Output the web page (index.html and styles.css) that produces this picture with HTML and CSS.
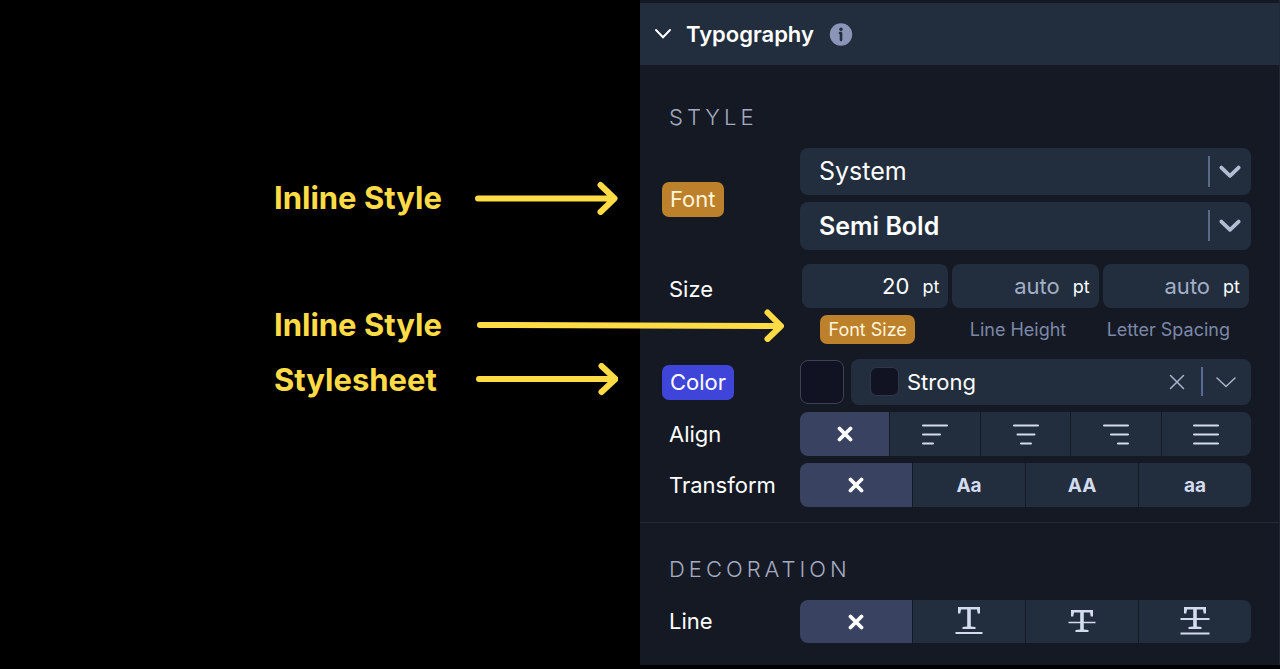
FILE: index.html
```html
<!DOCTYPE html>
<html lang="en">
<head>
<meta charset="utf-8">
<title>Typography</title>
<link rel="stylesheet" href="styles.css">
</head>
<body>
<svg class="defs" aria-hidden="true">
  <symbol id="cross" viewBox="0 0 16 16"><path d="M2.500 2.500l11 11M13.500 2.500l-11 11" fill="none" stroke="currentColor" stroke-width="3.800" stroke-linecap="round"/></symbol>
  <symbol id="chevron" viewBox="0 0 22 14"><path d="M2.400 2.600L11 10.800l8.600-8.200" fill="none" stroke="currentColor" stroke-width="3.800" stroke-linecap="round" stroke-linejoin="round"/></symbol>
  <symbol id="serif-t" viewBox="0 0 24 22"><path d="M1 0h22v6.500h-2.300L20 2.600h-6.200v16.800l4.700.6V22H5.500v-2l4.700-.6V2.600H4L3.300 6.500H1z" fill="currentColor"/></symbol>
</svg>
<div class="page">
  <aside class="notes">
    <div class="note"><span class="note-text">Inline Style</span>
      <svg class="arrow" width="143" height="34" viewBox="0 0 143 34"><path d="M3 17.500H139M125.500 4L139.500 17.500L125.500 31"/></svg></div>
    <div class="note note-second"><span class="note-text">Inline Style</span>
      <svg class="arrow" width="309" height="34" viewBox="0 0 309 34"><path d="M5 17L305 18M292.500 4.500L306 18L292.500 31"/></svg></div>
    <div class="note note-third"><span class="note-text">Stylesheet</span>
      <svg class="arrow" width="143" height="34" viewBox="0 0 143 34"><path d="M4 16H140M126.500 3L140.500 16L126.500 29"/></svg></div>
  </aside>

  <main class="panel">
    <header class="panel-head">
      <button class="toggle" type="button" aria-expanded="true">
        <svg width="18" height="12" viewBox="0 0 18 12"><path d="M2 2l7 7.200L16 2" fill="none" stroke="currentColor" stroke-width="2" stroke-linecap="round"/></svg>
        Typography
      </button>
      <button class="info" type="button" aria-label="About typography">
        <svg width="24" height="24" viewBox="0 0 24 24"><circle cx="12" cy="12.500" r="11.200" fill="#8a95b8"/><circle cx="12" cy="7.300" r="1.700" fill="#222d3d"/><path d="M11 11H12V18" fill="none" stroke="#222d3d" stroke-width="2.600" stroke-linecap="round" stroke-linejoin="round"/></svg>
      </button>
    </header>

    <section class="section">
      <h2 class="heading">STYLE</h2>

      <div class="row">
        <div class="label-cell"><label class="label badge amber" for="family">Font</label></div>
        <div class="stack">
          <div class="select-box">
            <select id="family" class="select"><option>System</option></select>
            <span class="caret"><svg width="22" height="14"><use href="#chevron"/></svg></span>
          </div>
          <div class="select-box">
            <select class="select semibold" aria-label="Font weight"><option>Semi Bold</option></select>
            <span class="caret"><svg width="22" height="14"><use href="#chevron"/></svg></span>
          </div>
        </div>
      </div>

      <div class="row row-size">
        <div class="label-cell"><span class="label">Size</span></div>
        <div class="sizes">
          <div class="field"><input id="size" class="number" type="text" value="20"><span class="unit">pt</span></div>
          <div class="field"><input id="leading" class="number" type="text" placeholder="auto"><span class="unit">pt</span></div>
          <div class="field"><input id="tracking" class="number" type="text" placeholder="auto"><span class="unit">pt</span></div>
          <div class="caption-cell"><label class="caption badge amber" for="size">Font Size</label></div>
          <div class="caption-cell"><label class="caption" for="leading">Line Height</label></div>
          <div class="caption-cell"><label class="caption" for="tracking">Letter Spacing</label></div>
        </div>
      </div>

      <div class="row row-color">
        <div class="label-cell"><label class="label badge blue" for="color">Color</label></div>
        <div class="color">
          <button class="swatch" type="button" aria-label="Pick a color"></button>
          <div class="select-box color-box">
            <select id="color" class="select color-select"><option>Strong</option></select>
            <span class="chip"></span>
            <span class="color-tools">
              <button class="clear" type="button" aria-label="Clear color"><svg width="16" height="16" viewBox="0 0 16 16"><path d="M1.500 1.500l13 13M14.500 1.500l-13 13" fill="none" stroke="currentColor" stroke-width="1.500" stroke-linecap="round"/></svg></button>
              <span class="thin-caret"><svg width="20" height="12" viewBox="0 0 20 12"><path d="M1 2l9 8.500L19 2" fill="none" stroke="currentColor" stroke-width="1.500" stroke-linecap="round"/></svg></span>
            </span>
          </div>
        </div>
      </div>

      <div class="row row-tight">
        <div class="label-cell"><span class="label" id="align">Align</span></div>
        <div class="segments" role="group" aria-labelledby="align">
          <button class="segment active" type="button" aria-label="No alignment" aria-pressed="true"><svg width="16" height="16"><use href="#cross"/></svg></button>
          <button class="segment" type="button" aria-label="Left"><svg class="lines" width="26" height="22" viewBox="0 0 26 22"><path d="M1 2.500h24M1 11.500h17M1 20.500h10"/></svg></button>
          <button class="segment" type="button" aria-label="Center"><svg class="lines" width="26" height="22" viewBox="0 0 26 22"><path d="M1 2.500h24M4.500 11.500h17M8 20.500h10"/></svg></button>
          <button class="segment" type="button" aria-label="Right"><svg class="lines" width="26" height="22" viewBox="0 0 26 22"><path d="M1 2.500h24M8 11.500h17M15 20.500h10"/></svg></button>
          <button class="segment" type="button" aria-label="Justify"><svg class="lines" width="26" height="22" viewBox="0 0 26 22"><path d="M1 2.500h24M1 11.500h24M1 20.500h24"/></svg></button>
        </div>
      </div>

      <div class="row row-tight">
        <div class="label-cell"><span class="label" id="transform">Transform</span></div>
        <div class="segments" role="group" aria-labelledby="transform">
          <button class="segment active" type="button" aria-label="No transform" aria-pressed="true"><svg width="16" height="16"><use href="#cross"/></svg></button>
          <button class="segment" type="button">Aa</button>
          <button class="segment" type="button">AA</button>
          <button class="segment" type="button">aa</button>
        </div>
      </div>
    </section>

    <section class="section section-decoration">
      <h2 class="heading">DECORATION</h2>
      <div class="row">
        <div class="label-cell"><span class="label" id="line">Line</span></div>
        <div class="segments" role="group" aria-labelledby="line">
          <button class="segment active" type="button" aria-label="No line" aria-pressed="true"><svg width="16" height="16"><use href="#cross"/></svg></button>
          <button class="segment" type="button" aria-label="Underline"><svg width="30" height="30" viewBox="0 0 30 30"><use href="#serif-t" x="3" y="0" width="24" height="22"/><path d="M1.500 26h27" stroke="currentColor" stroke-width="2"/></svg></button>
          <button class="segment" type="button" aria-label="Line through"><svg width="30" height="30" viewBox="0 0 30 30"><use href="#serif-t" x="3" y="3" width="24" height="22"/><path d="M1.500 15.500h27" stroke="currentColor" stroke-width="1.400"/></svg></button>
          <button class="segment" type="button" aria-label="Underline and line through"><svg width="30" height="30" viewBox="0 0 30 30"><use href="#serif-t" x="3" y="0" width="24" height="22"/><path d="M.5 12h29M.5 26.500h29" stroke="currentColor" stroke-width="2"/></svg></button>
        </div>
      </div>
    </section>
  </main>
</div>
</body>
</html>
```
FILE: styles.css
```css
* { box-sizing: border-box; }

body {
  margin: 0;
  background: #000;
  color: #fff;
  font-family: Inter, "Liberation Sans", sans-serif;
  font-size: 22px;
}

button, input, select {
  margin: 0;
  padding: 0;
  border: 0;
  background: none;
  color: inherit;
  font: inherit;
}

svg { display: block; flex-shrink: 0; }
.defs { display: none; }

.page {
  display: grid;
  grid-template-columns: 1fr 1fr;
  align-items: start;
}

/* Annotations */
.notes {
  position: relative;
  z-index: 1;
  display: flex;
  flex-direction: column;
  align-items: flex-end;
  padding: 178px 22px 0 0;
  color: #ffdc45;
  pointer-events: none;
}
.note { display: flex; align-items: center; width: 344px; height: 40px; }
.note-second { margin-top: 87px; }
.note-third { margin-top: 15px; }
.note-text { flex: 0 0 201px; font-size: 31px; font-weight: 700; line-height: 40px; }
.arrow {
  fill: none;
  stroke: currentColor;
  stroke-width: 6px;
  stroke-linecap: round;
  stroke-linejoin: round;
}

/* Panel */
.panel {
  min-width: 0;
  padding-top: 3px;
  background: #151924;
  border-right: 1px solid #1e2838;
}
.panel-head {
  display: flex;
  align-items: center;
  gap: 15px;
  height: 62px;
  padding-left: 14px;
  background: #222d3d;
}
.toggle { display: flex; align-items: center; gap: 14px; font-weight: 600; }

.section { padding: 40px 28px 15px 22px; }
.section-decoration { padding: 34px 28px 22px 22px; border-top: 1px solid #252c38; }
.heading {
  margin: 0 0 19px;
  padding-left: 7px;
  color: #a3abc0;
  font-size: 22px;
  font-weight: 300;
  line-height: 24px;
  letter-spacing: 4px;
}

.row {
  display: grid;
  grid-template-columns: 138px minmax(0, 1fr);
  align-items: center;
}
.row-size { margin-top: 14px; align-items: start; }
.row-color { margin-top: 15px; }
.row-tight { margin-top: 7px; }
.label-cell { display: flex; align-items: center; }
.row-size .label-cell { height: 50px; }
.label { padding: 0 7px; line-height: 35px; }
.badge { padding: 0 8px; border-radius: 7px; }
.amber { background: #bd802b; color: #fff6dc; }
.blue { background: #4045da; }

/* Selects */
.stack { display: grid; gap: 7px; }
.select-box { position: relative; display: flex; }
.select {
  appearance: none;
  width: 100%;
  height: 47px;
  padding: 0 60px 1px 19px;
  border-radius: 8px;
  background: #222d3d;
  font-size: 25px;
}
.semibold { height: 48px; padding-bottom: 0; font-weight: 600; }
.caret {
  position: absolute;
  top: 8px;
  right: 10px;
  display: flex;
  align-items: center;
  height: 31px;
  padding-left: 9px;
  border-left: 2px solid #5a6a88;
  color: #b1bdd3;
  pointer-events: none;
}

/* Size fields */
.sizes {
  display: grid;
  grid-template-columns: repeat(3, minmax(0, 1fr));
  gap: 7px 4px;
  padding: 0 2px;
}
.field {
  display: flex;
  align-items: center;
  gap: 13px;
  height: 44px;
  padding-right: 9px;
  border-radius: 8px;
  background: #222d3d;
}
.number { flex: 1; min-width: 0; text-align: right; }
.number::placeholder { color: #a3afc6; opacity: 1; }
.unit { font-size: 18px; }
.caption-cell { display: flex; justify-content: center; padding-right: 15px; }
.caption { padding: 0 8px; color: #7c88a8; font-size: 18px; line-height: 29px; white-space: nowrap; }
.caption.amber { color: #fff6dc; }

/* Color */
.color { display: flex; align-items: center; gap: 7px; }
.swatch { width: 44px; height: 44px; border: 1px solid #3b4257; border-radius: 8px; background: #111222; }
.color-box { flex: 1; min-width: 0; }
.color-select { height: 46px; padding: 0 100px 0 56px; font-size: 22px; }
.chip {
  position: absolute;
  top: 8px;
  left: 19px;
  width: 29px;
  height: 29px;
  border: 1px solid #303749;
  border-radius: 7px;
  background: #111222;
  pointer-events: none;
}
.color-tools {
  position: absolute;
  top: 8px;
  right: 15px;
  display: flex;
  align-items: center;
  gap: 16px;
  height: 29px;
  color: #a9b5cc;
  pointer-events: none;
}
.clear { pointer-events: auto; }
.thin-caret {
  display: flex;
  align-items: center;
  height: 29px;
  padding-left: 13px;
  border-left: 2px solid #5a6a94;
}

/* Segmented buttons */
.segments {
  display: flex;
  gap: 1px;
  height: 44px;
  overflow: hidden;
  border-radius: 8px;
}
.section-decoration .segments { height: 43px; }
.segment {
  display: flex;
  flex: 1 1 0;
  align-items: center;
  justify-content: center;
  background: #222d3d;
  color: #d3dcee;
  font-size: 19px;
  font-weight: 700;
}
.active { background: #394260; color: #fff; }
.lines { fill: none; stroke: currentColor; stroke-width: 2px; stroke-linecap: round; }
```
